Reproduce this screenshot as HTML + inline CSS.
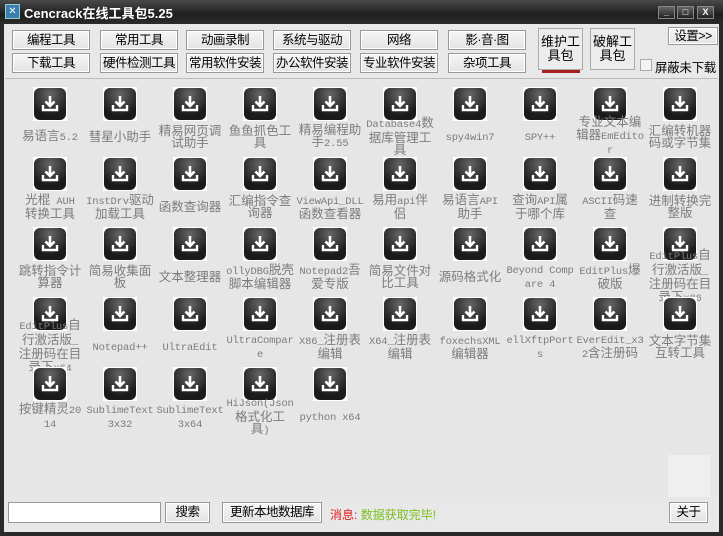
<!DOCTYPE html>
<html><head><meta charset="utf-8"><style>
*{margin:0;padding:0;box-sizing:border-box}
body{width:723px;height:536px;overflow:hidden;background:#2a2a2a;font-family:"Liberation Sans","Noto Sans CJK SC",sans-serif;font-size:12px;position:relative}
.title{position:absolute;left:0;top:0;width:723px;height:24px;background:linear-gradient(#4a4a4a,#1e1e1e 60%,#2c2c2c)}
.title .t{position:absolute;left:24px;top:3px;color:#fff;font-weight:bold;font-size:13px}
.logo{position:absolute;left:5px;top:4px;width:15px;height:15px;background:#3a7fb0;border:1px solid #9cc;color:#fff;font-size:10px;line-height:13px;text-align:center}
.wb{position:absolute;top:6px;width:17px;height:13px;background:linear-gradient(#666,#222);border:1px solid #888;color:#fff;font-size:9px;line-height:11px;text-align:center;font-weight:bold}
.client{position:absolute;left:4px;top:24px;width:715px;height:508px;background:#e8e8e8}
.btn{position:absolute;height:20px;background:linear-gradient(#f6f6f6,#e4e4e4);border:1px solid #999;box-shadow:inset 0 0 0 1px #fff;text-align:center;line-height:18px;font-size:12.5px;color:#000;white-space:nowrap;letter-spacing:-0.5px;overflow:hidden}
.big{position:absolute;top:28px;width:45px;height:42px;border:1px solid #aaa;background:#ececec;text-align:center;font-size:13px;line-height:14px;padding-top:6px}
.panel{position:absolute;left:5px;top:78px;width:713px;height:419px;border-top:1px solid #bbb;background:#e6e6e6}
.it{position:absolute;width:70px;height:70px}
.ic{position:absolute;left:18px;top:2px;width:34px;height:34px;background:#fff}
.ic div{position:absolute;left:1px;top:1px;width:32px;height:32px;border-radius:6px;background:radial-gradient(circle at 50% 20%,#666,#1a1a1a 70%)}
.lb{position:absolute;left:1px;top:37px;width:68px;height:30px;display:flex;align-items:center;justify-content:center;color:#7c7c7c;font-size:12.5px;line-height:12.5px}
.lb div{width:68px;text-align:center;word-break:break-all}
.lb span{font-family:"Liberation Mono",monospace;font-size:10.5px;letter-spacing:-0.2px}
</style></head><body>
<div class="title"><div class="logo">✕</div><div class="t">Cencrack在线工具包5.25</div>
<div class="wb" style="left:658px">_</div><div class="wb" style="left:677px">□</div><div class="wb" style="left:697px">X</div></div>
<div class="client"></div>
<div class="btn" style="left:12px;top:30px;width:78px">编程工具</div>
<div class="btn" style="left:100px;top:30px;width:78px">常用工具</div>
<div class="btn" style="left:186px;top:30px;width:78px">动画录制</div>
<div class="btn" style="left:273px;top:30px;width:78px">系统与驱动</div>
<div class="btn" style="left:360px;top:30px;width:78px">网络</div>
<div class="btn" style="left:448px;top:30px;width:78px">影·音·图</div>
<div class="btn" style="left:12px;top:53px;width:78px">下载工具</div>
<div class="btn" style="left:100px;top:53px;width:78px">硬件检测工具</div>
<div class="btn" style="left:186px;top:53px;width:78px">常用软件安装</div>
<div class="btn" style="left:273px;top:53px;width:78px">办公软件安装</div>
<div class="btn" style="left:360px;top:53px;width:78px">专业软件安装</div>
<div class="btn" style="left:448px;top:53px;width:78px">杂项工具</div>
<div class="big" style="left:538px">维护工<br>具包</div>
<div style="position:absolute;left:542px;top:70px;width:38px;height:3px;background:#a52020"></div>
<div class="big" style="left:590px">破解工<br>具包</div>
<div class="btn" style="left:668px;top:27px;width:50px;height:18px;line-height:16px">设置>></div>
<div style="position:absolute;left:640px;top:59px;width:12px;height:12px;border:1px solid #aaa;background:#f4f4f4"></div>
<div style="position:absolute;left:655px;top:57px;font-size:12.5px;letter-spacing:-0.3px">屏蔽未下载</div>
<div class="panel" id="p"></div>
<div style="position:absolute;left:668px;top:455px;width:42px;height:42px;background:#efefef"></div>
<div style="position:absolute;left:8px;top:502px;width:153px;height:21px;background:#fff;border:1px solid #999"></div>
<div class="btn" style="left:165px;top:502px;width:45px;height:21px">搜索</div>
<div class="btn" style="left:222px;top:502px;width:100px;height:21px">更新本地数据库</div>
<div style="position:absolute;left:330px;top:506px;font-size:12px"><span style="color:#e02020">消息:</span> <span style="color:#7cc020">数据获取完毕!</span></div>
<div class="btn" style="left:669px;top:502px;width:39px;height:21px">关于</div>
<script>
var L=[["易语言5.2","彗星小助手","精易网页调试助手","鱼鱼抓色工具","精易编程助手2.55","Database4数据库管理工具","spy4win7","SPY++","专业文本编辑器EmEditor","汇编转机器码或字节集"],
["光棍 AUH 转换工具","InstDrv驱动加载工具","函数查询器","汇编指令查询器","ViewApi_DLL函数查看器","易用api伴侣","易语言API助手","查询API属于哪个库","ASCII码速查","进制转换完整版"],
["跳转指令计算器","简易收集面板","文本整理器","ollyDBG脱壳脚本编辑器","Notepad2吾爱专版","简易文件对比工具","源码格式化","Beyond Compare 4","EditPlus爆破版","EditPlus自行激活版_注册码在目录下x86"],
["EditPlus自行激活版_注册码在目录下x64","Notepad++","UltraEdit","UltraCompare","X86_注册表编辑","X64_注册表编辑","foxechsXML编辑器","ellXftpPorts","EverEdit_x32含注册码","文本字节集互转工具"],
["按键精灵2014","SublimeText3x32","SublimeText3x64","HiJson(Json格式化工具)","python x64"]];
var h="";for(var r=0;r<L.length;r++)for(var c=0;c<L[r].length;c++){var t=L[r][c].replace(/[A-Za-z0-9_+(). ]+/g,function(m){return '<span>'+m+'</span>'});h+='<div class="it" style="left:'+(10+c*70)+'px;top:'+(6+r*70)+'px"><div class="ic"><div><svg width="32" height="32" viewBox="0 0 32 32"><path d="M16 8v10M11.5 13.5L16 18l4.5-4.5" stroke="#fff" stroke-width="2.6" fill="none"/><path d="M9 17v5h14v-5" stroke="#fff" stroke-width="2.4" fill="none"/></svg></div></div><div class="lb"><div>'+t+'</div></div></div>';}
document.getElementById("p").innerHTML=h;
</script>
</body></html>
